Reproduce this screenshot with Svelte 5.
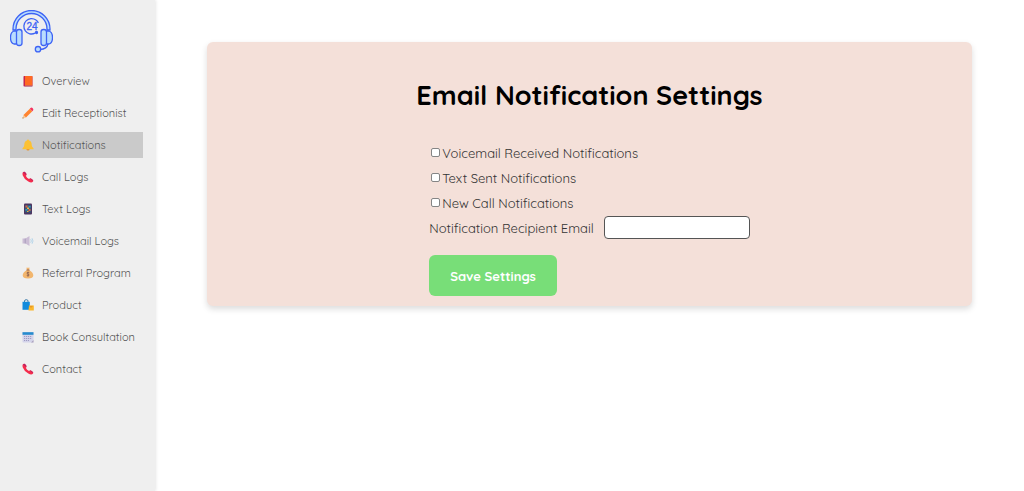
<script lang="ts">
	const links = [
		{ label: 'Overview', icon: 'book' },
		{ label: 'Edit Receptionist', icon: 'pencil' },
		{ label: 'Notifications', icon: 'bell' },
		{ label: 'Call Logs', icon: 'phone' },
		{ label: 'Text Logs', icon: 'mobile' },
		{ label: 'Voicemail Logs', icon: 'speaker' },
		{ label: 'Referral Program', icon: 'money' },
		{ label: 'Product', icon: 'bags' },
		{ label: 'Book Consultation', icon: 'calendar' },
		{ label: 'Contact', icon: 'phone' }
	];

	let active = $state('Notifications');
	let voicemailReceived = $state(false);
	let textSent = $state(false);
	let newCall = $state(false);
	let recipientEmail = $state('');

	function handleSubmit(event: SubmitEvent) {
		event.preventDefault();
	}
</script>

<div class="layout">
	<aside class="sidebar">
		<svg class="logo" viewBox="0 0 43 43" fill="none" stroke="#3d63f5" stroke-width="1.3" role="img" aria-label="24 hour reception">
			<path d="M3 20v-1a18.500 18.500 0 0 1 37 0v1h-3v-1a15.500 15.500 0 0 0-31 0v1z" fill="#b9dcfd" />
			<path d="M6 21H4q-3.500 1-3.500 6.500T4 34h2M37 21h2q3.500 1 3.500 6.500T39 34h-2" fill="#b9dcfd" />
			<rect x="6.500" y="19.500" width="5.500" height="16" rx="2.500" fill="#b9dcfd" />
			<rect x="31" y="19.500" width="5.500" height="16" rx="2.500" fill="#b9dcfd" />
			<path d="M38 34q-1 5-8 5.500" />
			<circle cx="28" cy="39.200" r="2.700" fill="#b9dcfd" />
			<path d="M26 10a7.700 7.700 0 1 0-1 13.200M26 10q1.800 1.200 2.300 3" />
			<circle cx="26.500" cy="22.500" r="1" fill="#3d63f5" />
			<text x="22" y="20" text-anchor="middle" class="logo-text">24</text>
		</svg>

		<nav>
			{#each links as link}
				<a
					href="#{link.label.toLowerCase().replaceAll(' ', '-')}"
					class="nav-link"
					class:active={active === link.label}
					aria-current={active === link.label ? 'page' : undefined}
					onclick={() => (active = link.label)}
				>
					<svg class="nav-icon" viewBox="0 0 12 12" aria-hidden="true">
						{#if link.icon === 'book'}
							<rect x="1.500" y="1" width="9" height="10.500" rx=".7" fill="#c4234e" />
							<rect x="3" y="1" width="7.300" height="9.700" fill="#ff6a22" />
							<path d="M3 11h7.500" stroke="#a47b96" stroke-width=".7" />
						{:else if link.icon === 'pencil'}
							<path d="M.5 11.500l1-3.500 2.500 2.500z" fill="#f7c894" />
							<path d="M1.500 8L7.800 1.700l2.500 2.500L4 10.500z" fill="#ff8430" />
							<path d="M7.800 1.700l.7-.7q1-.8 2 .1l.4.400q.9 1 .1 2l-.7.700z" fill="#f5315e" />
							<path d="M.4 11.600l.4-1.500 1.100 1.100z" fill="#a87846" />
						{:else if link.icon === 'bell'}
							<circle cx="6" cy="10" r="1.600" fill="#e8912a" />
							<path d="M6 .5q1 0 1.100 1.100Q9.700 2.500 9.700 6q0 2 1.800 3.300v1H.5v-1Q2.300 8 2.300 6q0-3.500 2.600-4.400Q5 .5 6 .5z" fill="#fcc133" />
						{:else if link.icon === 'phone'}
							<path d="M1 1.200Q2 .2 3 1l1.500 2q.5.800-.7 1.800Q4.800 7 7 8.100q1.100-1.100 1.900-.6l2 1.400q.9.800-.1 1.900-1.500 1.300-4.500-.3Q2.300 8.500.8 4.500.1 2.100 1 1.200z" fill="#f42c4c" />
							<path d="M1 1.200Q2 .2 3 1l1.500 2-.9.700L1 1.200zM8.900 7.500l2 1.400-.1 1L8 7.800z" fill="#b82364" />
						{:else if link.icon === 'mobile'}
							<rect x="2" y=".5" width="8" height="11" rx="1" fill="#4c3561" />
							<rect x="3" y="2" width="6" height="7.500" fill="#365879" />
							<path d="M3.500 2.500h2v2h-2zM6.500 6h2v2h-2z" fill="#e4633e" />
							<path d="M6.500 3h2v1.500h-2zM3.500 6h2v1.500h-2z" fill="#2aa1c5" />
							<path d="M5 4.500h2V6H5zM5 8h1.500v1H5z" fill="#ecb43f" />
						{:else if link.icon === 'speaker'}
							<path d="M.5 3.500h3L7.500 1v10L3.500 8.500h-3z" fill="#cbbdd5" />
							<path d="M2.700 3.500h1v5h-1z" fill="#aa9cbc" />
							<path d="M8.700 4.200q1.300 1.800 0 3.600M10 3.200q2 2.800 0 5.600" fill="none" stroke="#a9cfe9" stroke-width=".8" />
						{:else if link.icon === 'money'}
							<path d="M4.300.5q.9.700 1.700 0 .8.700 1.700 0L7 3q4.300 2.500 4.300 5.300 0 3.200-5.300 3.200T.7 8.300Q.7 5.500 5 3z" fill="#f2b66e" />
							<path d="M4.500 3h3" stroke="#8e5945" stroke-width=".9" />
							<path d="M7.300 5.700Q6 4.900 5 5.700q-.5 1 1 1.400 1.500.3 1 1.300-.9.900-2.300 0M6 4.700v5" fill="none" stroke="#8f6250" stroke-width=".8" />
						{:else if link.icon === 'bags'}
							<path d="M2.500 3V2q0-1.300 1.800-1.300T6 2v1" fill="none" stroke="#16629c" stroke-width=".8" />
							<path d="M.5 2.800h7.300v8H.5z" fill="#128bdc" />
							<path d="M7 6.500h4.800v5H6.500z" fill="#fbb82d" />
							<path d="M8 6.700v1.200h2V6.700" fill="none" stroke="#d57e22" stroke-width=".6" />
						{:else if link.icon === 'calendar'}
							<rect x=".5" y="1" width="11" height="10.500" rx=".7" fill="#d4d4ea" />
							<path d="M.5 1.200h11v2.600H.5z" fill="#268bce" />
							<path d="M2 5.500h8M2 7.500h8M2 9.500h5" stroke="#9994be" stroke-width=".9" stroke-dasharray="1.200 .8" />
							<path d="M9 11.500l2.500-2.500v2.500z" fill="#aaa0bb" />
						{/if}
					</svg>
					{link.label}
				</a>
			{/each}
		</nav>
	</aside>

	<main>
		<section class="card">
			<h1>Email Notification Settings</h1>
			<form onsubmit={handleSubmit}>
				<label class="check">
					<input type="checkbox" bind:checked={voicemailReceived} />
					Voicemail Received Notifications
				</label>
				<label class="check">
					<input type="checkbox" bind:checked={textSent} />
					Text Sent Notifications
				</label>
				<label class="check">
					<input type="checkbox" bind:checked={newCall} />
					New Call Notifications
				</label>
				<div class="email-row">
					<label for="recipientEmail">Notification Recipient Email</label>
					<input type="email" id="recipientEmail" bind:value={recipientEmail} />
				</div>
				<button type="submit">Save Settings</button>
			</form>
		</section>
	</main>
</div>

<style>
	:global(body) {
		margin: 0;
		background: #fff;
	}

	.layout {
		display: flex;
		min-height: 100vh;
		font-family: Quicksand, Lato, sans-serif;
		color: #333;
	}

	.sidebar {
		box-sizing: border-box;
		flex: 0 0 155px;
		padding: 10px 12px 10px 10px;
		background: #efefef;
		box-shadow: 1px 0 3px rgba(0, 0, 0, 0.1);
	}

	.logo {
		display: block;
		width: 43px;
		height: 43px;
		margin-bottom: 15px;
	}

	.logo-text {
		font-family: 'Liberation Sans', sans-serif;
		font-size: 10px;
		fill: #3d63f5;
		stroke-width: 0.3;
	}

	nav {
		display: flex;
		flex-direction: column;
		gap: 6px;
	}

	.nav-link {
		display: flex;
		align-items: center;
		gap: 8px;
		height: 26px;
		padding-left: 12px;
		font-size: 11px;
		color: #555;
		text-decoration: none;
		white-space: nowrap;
	}

	.nav-link.active {
		background: #cacaca;
	}

	.nav-icon {
		flex: none;
		width: 12px;
		height: 12px;
	}

	main {
		flex: 1;
		padding-top: 42px;
	}

	.card {
		box-sizing: border-box;
		display: flex;
		flex-direction: column;
		align-items: center;
		width: 88%;
		margin: 0 auto;
		padding: 32px 10px 10px;
		border-radius: 6px;
		background: #f4e0d9;
		box-shadow: 0 3px 6px rgba(0, 0, 0, 0.14);
	}

	h1 {
		margin: 0 0 24px;
		font-size: 27px;
		line-height: 42px;
		font-weight: 700;
		color: #000;
	}

	form {
		display: flex;
		flex-direction: column;
		align-items: flex-start;
		font-size: 13px;
	}

	.check {
		display: flex;
		align-items: center;
		gap: 2px;
		height: 25px;
	}

	.check input {
		box-sizing: border-box;
		appearance: none;
		width: 9px;
		height: 9px;
		margin: 0 0 0 2px;
		border: 1px solid #858585;
		border-radius: 2px;
		background: #fff;
	}

	.check input:checked {
		background: #0075ff;
	}

	.email-row {
		display: flex;
		align-items: center;
		gap: 10px;
		margin: 1px 0 16px;
	}

	.email-row input {
		box-sizing: border-box;
		width: 146px;
		height: 23px;
		padding: 2px 6px;
		border: 1px solid #555;
		border-radius: 4px;
		font: inherit;
		background: #fff;
	}

	button {
		height: 41px;
		padding: 0 21px;
		border: none;
		border-radius: 6px;
		font-family: inherit;
		font-size: 13px;
		font-weight: 700;
		color: #fff;
		background: #78de78;
		cursor: pointer;
	}
</style>
